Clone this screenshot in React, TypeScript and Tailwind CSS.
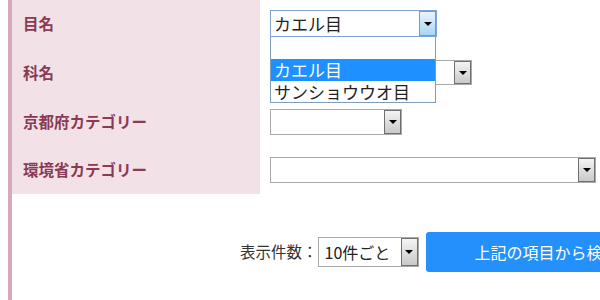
import React from "react";

const font = { fontFamily: '"Noto Sans CJK JP", "Noto Sans", sans-serif' };

function Arrow() {
  return (
    <div className="w-0 h-0 border-l-[4px] border-r-[4px] border-t-[4px] border-l-transparent border-r-transparent border-t-black" />
  );
}

function GrayButton() {
  return (
    <div className="w-[17px] shrink-0 self-stretch border border-[#707070] bg-gradient-to-b from-[#f4f4f4] to-[#c9c9c9] flex items-center justify-center">
      <Arrow />
    </div>
  );
}

function Select({ w, h = 26, text, fs = "text-[16px]" }: { w: number; h?: number; text?: string; fs?: string }) {
  return (
    <div
      className="flex shrink-0 border border-[#a9a9a9] bg-white"
      style={{ width: w, height: h }}
    >
      <div className={`flex-1 flex items-center pl-[6px] whitespace-nowrap ${fs} text-[#222]`}>{text}</div>
      <GrayButton />
    </div>
  );
}

const rows = [
  { label: "目名", h: "h-[48px]" },
  { label: "科名", h: "h-[49px]" },
  { label: "京都府カテゴリー", h: "h-[49px]" },
  { label: "環境省カテゴリー", h: "h-[48px]" },
];

export default function App() {
  return (
    <div className="w-[600px] h-[300px] overflow-hidden bg-white relative" style={font}>
      <div className="ml-[8px] border-l-4 border-[#d8a8b5] h-[300px]">
        {rows.map((r, i) => (
          <div key={i} className={`flex ${r.h}`}>
            <div className="w-[248px] shrink-0 bg-[#f2e2e7] flex items-center pl-[11px] text-[15.5px] font-bold text-[#8b3a55]">
              {r.label}
            </div>
            <div className="flex-1 flex items-center pl-[10px]">
              {i === 0 && (
                <div className="flex w-[167px] h-[27px] border border-[#7da6d6] bg-white mt-[-1px]">
                  <div className="flex-1 flex items-center pl-[3px] text-[17px] text-[#222]">カエル目</div>
                  <div className="w-[17px] self-stretch border border-[#6f9ccf] bg-gradient-to-b from-[#e8f4fc] to-[#a8d6f3] flex items-center justify-center">
                    <Arrow />
                  </div>
                </div>
              )}
              {i === 1 && <Select w={202} h={25} />}
              {i === 2 && <Select w={132} h={26} />}
              {i === 3 && <Select w={326} h={26} />}
            </div>
          </div>
        ))}
        <div className="flex items-center pl-[228px] mt-[38px] h-[40px] w-[800px]">
          <span className="shrink-0 whitespace-nowrap text-[15.5px] text-[#333]">表示件数：</span>
          <Select w={101} h={30} text="10件ごと" fs="text-[16px]" />
          <div className="shrink-0 ml-[7px] h-[40px] w-[200px] rounded-[3px] bg-[#2490fb] flex items-center pl-[49px] text-white text-[16px] whitespace-nowrap">
            上記の項目から検索
          </div>
        </div>
      </div>
      <div className="absolute left-[270px] top-[37px] w-[166px] border border-t-0 border-[#7f9db9] bg-white text-[17px]">
        <div className="h-[22px]" />
        <div className="h-[22px] bg-[#1e90ff] text-white flex items-center pl-[3px]">カエル目</div>
        <div className="h-[21px] text-[#222] flex items-center pl-[3px]">サンショウウオ目</div>
      </div>
    </div>
  );
}
